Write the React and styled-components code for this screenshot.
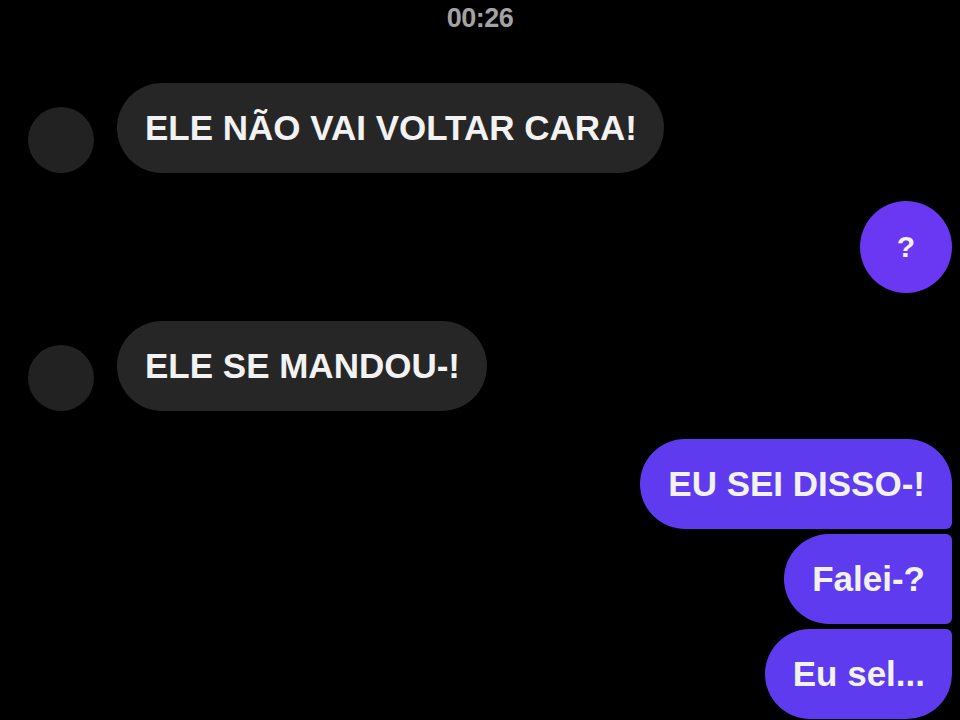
import React from "react";
import styled, { createGlobalStyle, css } from "styled-components";

const Global = createGlobalStyle`
  html, body { margin: 0; padding: 0; background: #000; }
  body { font-family: "Liberation Sans", Arial, sans-serif; overflow: hidden; }
`;

const Page = styled.div`
  width: 960px;
  height: 720px;
  box-sizing: border-box;
  padding: 0 8px 0 28px;
  display: flex;
  flex-direction: column;
  background: #000;
`;

const Stamp = styled.div`
  text-align: center;
  color: #a3a3a3;
  font-size: 27px;
  line-height: 36px;
  font-weight: 700;
  letter-spacing: -0.5px;
  margin: 0 20px 47px 0;
`;

const Row = styled.div`
  display: flex;
  align-items: flex-end;
  justify-content: ${(p) => (p.$out ? "flex-end" : "flex-start")};
  gap: 23px;
  margin-bottom: 28px;
`;

const Group = styled.div`
  display: flex;
  flex-direction: column;
  align-items: flex-end;
  gap: 5px;
`;

const Avatar = styled.div`
  width: 66px;
  height: 66px;
  border-radius: 50%;
  background: #222;
  flex: none;
`;

const shapes = {
  full: css`border-radius: 45px;`,
  first: css`border-radius: 45px 45px 6px 45px;`,
  mid: css`border-radius: 45px 6px 6px 45px;`,
  last: css`border-radius: 45px 6px 45px 45px;`,
};

const Bubble = styled.div`
  height: 90px;
  box-sizing: border-box;
  display: flex;
  align-items: center;
  justify-content: center;
  padding: 0 27px 0 28px;
  color: #f2f2f2;
  font-size: 35px;
  font-weight: 700;
  white-space: nowrap;
  background: ${(p) => (p.$out ? "#5f3bf0" : "#262626")};
  ${(p) => shapes[p.$shape || "full"]}
  ${(p) =>
    p.$round &&
    css`
      width: 92px;
      height: 92px;
      padding: 0;
      border-radius: 50%;
      background: #6a38f2;
      font-size: 30px;
    `}
`;

export default function App() {
  return (
    <>
      <Global />
      <Page>
        <Stamp>00:26</Stamp>
        <Row>
          <Avatar />
          <Bubble>ELE NÃO VAI VOLTAR CARA!</Bubble>
        </Row>
        <Row $out>
          <Bubble $out $round>?</Bubble>
        </Row>
        <Row>
          <Avatar />
          <Bubble>ELE SE MANDOU-!</Bubble>
        </Row>
        <Row $out>
          <Group>
            <Bubble $out $shape="first">EU SEI DISSO-!</Bubble>
            <Bubble $out $shape="mid">Falei-?</Bubble>
            <Bubble $out $shape="last">Eu sel...</Bubble>
          </Group>
        </Row>
      </Page>
    </>
  );
}
